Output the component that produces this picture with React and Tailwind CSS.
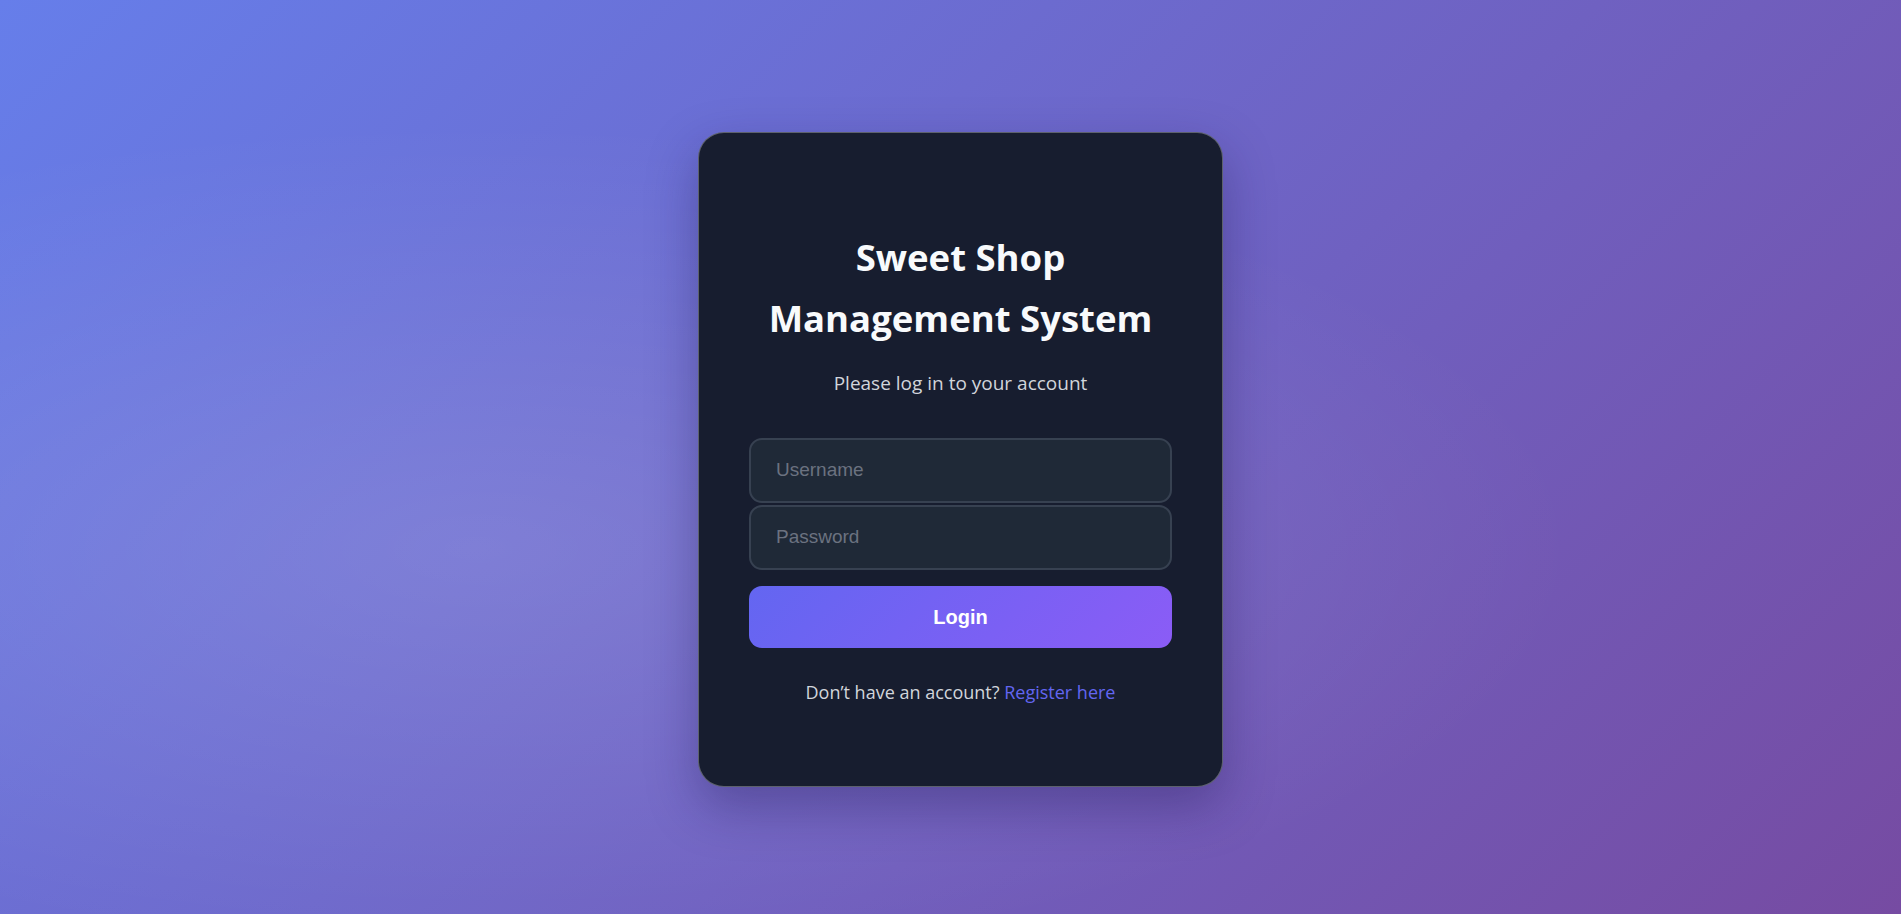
import React, { useState } from 'react';

const Login = () => {
    const [username, setUsername] = useState('');
    const [password, setPassword] = useState('');

    return (
        <div className="relative min-h-[914px] w-full overflow-hidden bg-[linear-gradient(135deg,#667eea_0%,#764ba2_100%)]">
            {/* soft glow over the gradient */}
            <div className="pointer-events-none absolute inset-0 bg-[radial-gradient(ellipse_at_25%_60%,rgba(255,255,255,0.13),transparent_55%)]"></div>

            <div className="relative flex min-h-[914px] items-center justify-center pl-[20px] pt-[4px]">
                <div className="w-[525px] rounded-[26px] border border-white/30 bg-[#171d2f] px-[50px] pt-[94px] pb-[80px] shadow-[0_20px_50px_rgba(30,20,80,0.35)]">
                    <h1 className="text-center font-['Open_Sans',sans-serif] text-[36.5px] font-bold leading-[61px] text-[#f8fafc]">
                        Sweet Shop
                        <br />
                        Management System
                    </h1>
                    <p className="mt-[20px] text-center font-['Open_Sans',sans-serif] text-[19px] leading-[28px] text-[#d1d5db]">
                        Please log in to your account
                    </p>

                    <form className="mt-[41px] flex flex-col" onSubmit={(e) => e.preventDefault()}>
                        <input
                            type="text"
                            placeholder="Username"
                            value={username}
                            onChange={(e) => setUsername(e.target.value)}
                            className="h-[65px] w-full rounded-[13px] border-2 border-[#374151] bg-[#1f2937] px-[25px] font-['Liberation_Sans',Arial,sans-serif] text-[19px] text-white outline-none placeholder:text-[#6b7280]"
                        />
                        <input
                            type="password"
                            placeholder="Password"
                            value={password}
                            onChange={(e) => setPassword(e.target.value)}
                            className="mt-[2px] h-[65px] w-full rounded-[13px] border-2 border-[#374151] bg-[#1f2937] px-[25px] font-['Liberation_Sans',Arial,sans-serif] text-[19px] text-white outline-none placeholder:text-[#6b7280]"
                        />
                        <button
                            type="submit"
                            className="mt-[16px] h-[62px] w-full rounded-[13px] bg-[linear-gradient(135deg,#6366f1_0%,#8b5cf6_100%)] font-['Liberation_Sans',Arial,sans-serif] text-[20px] font-bold text-white"
                        >
                            Login
                        </button>
                    </form>

                    <p className="mt-[31px] text-center font-['Open_Sans',sans-serif] text-[18px] leading-[27px] text-[#d1d5db]">
                        Don’t have an account?{' '}
                        <a href="#" className="text-[#6366f1]">Register here</a>
                    </p>
                </div>
            </div>
        </div>
    );
};

export default function App() {
    return <Login />;
}
